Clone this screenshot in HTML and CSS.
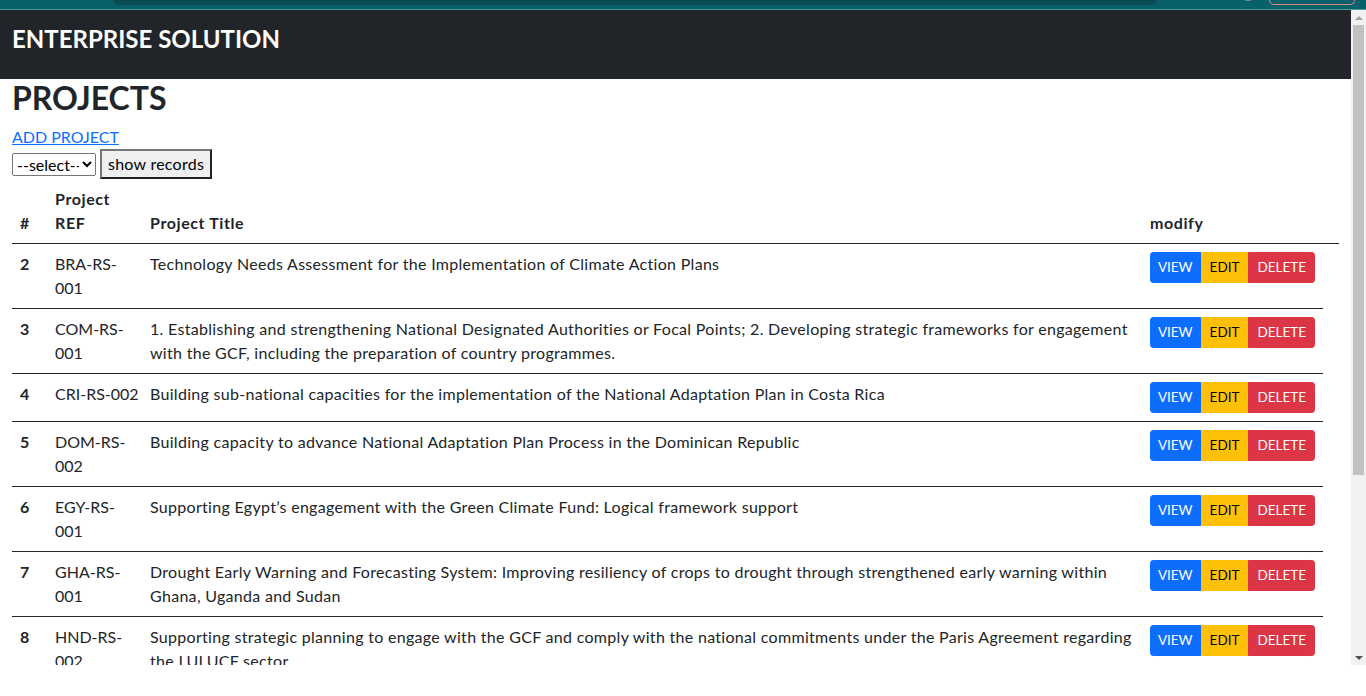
FILE: index.html
```html
<!DOCTYPE html>
<html lang="en">
<head>
<meta charset="utf-8">
<title>Projects</title>
<link rel="stylesheet" href="styles.css">
</head>
<body>
<div class="os-strip">
  <div class="strip-tab"></div>
  <div class="strip-dot"></div>
  <div class="strip-pill"></div>
</div>
<div class="viewport">
  <div class="page">
    <nav class="navbar"><span class="brand">ENTERPRISE SOLUTION</span></nav>
    <main class="container">
      <h2 class="page-title">PROJECTS</h2>
      <a href="#" class="add-link">ADD PROJECT</a>
      <form class="filter">
        <select class="filter-select"><option>--select--</option></select>
        <button type="button" class="filter-btn">show records</button>
      </form>
      <table class="table">
        <colgroup>
          <col class="c-num"><col class="c-ref"><col class="c-title"><col class="c-mod"><col class="c-extra">
        </colgroup>
        <thead>
          <tr><th>#</th><th class="ref">Project REF</th><th>Project Title</th><th>modify</th><th></th></tr>
        </thead>
        <tbody>
          <tr><th>2</th><td class="ref">BRA-RS-001</td><td class="title">Technology Needs Assessment for the Implementation of Climate Action Plans</td><td><div class="btn-group"><a class="btn btn-view" href="#">VIEW</a><a class="btn btn-edit" href="#">EDIT</a><a class="btn btn-delete" href="#">DELETE</a></div></td></tr>
          <tr><th>3</th><td class="ref">COM-RS-001</td><td class="title">1. Establishing and strengthening National Designated Authorities or Focal Points; 2. Developing strategic frameworks for engagement with the GCF, including the preparation of country programmes.</td><td><div class="btn-group"><a class="btn btn-view" href="#">VIEW</a><a class="btn btn-edit" href="#">EDIT</a><a class="btn btn-delete" href="#">DELETE</a></div></td></tr>
          <tr><th>4</th><td class="ref">CRI-RS-002</td><td class="title">Building sub-national capacities for the implementation of the National Adaptation Plan in Costa Rica</td><td><div class="btn-group"><a class="btn btn-view" href="#">VIEW</a><a class="btn btn-edit" href="#">EDIT</a><a class="btn btn-delete" href="#">DELETE</a></div></td></tr>
          <tr><th>5</th><td class="ref">DOM-RS-002</td><td class="title">Building capacity to advance National Adaptation Plan Process in the Dominican Republic</td><td><div class="btn-group"><a class="btn btn-view" href="#">VIEW</a><a class="btn btn-edit" href="#">EDIT</a><a class="btn btn-delete" href="#">DELETE</a></div></td></tr>
          <tr><th>6</th><td class="ref">EGY-RS-001</td><td class="title">Supporting Egypt’s engagement with the Green Climate Fund: Logical framework support</td><td><div class="btn-group"><a class="btn btn-view" href="#">VIEW</a><a class="btn btn-edit" href="#">EDIT</a><a class="btn btn-delete" href="#">DELETE</a></div></td></tr>
          <tr><th>7</th><td class="ref">GHA-RS-001</td><td class="title">Drought Early Warning and Forecasting System: Improving resiliency of crops to drought through strengthened early warning within Ghana, Uganda and Sudan</td><td><div class="btn-group"><a class="btn btn-view" href="#">VIEW</a><a class="btn btn-edit" href="#">EDIT</a><a class="btn btn-delete" href="#">DELETE</a></div></td></tr>
          <tr><th>8</th><td class="ref">HND-RS-002</td><td class="title">Supporting strategic planning to engage with the GCF and comply with the national commitments under the Paris Agreement regarding the LULUCF sector</td><td><div class="btn-group"><a class="btn btn-view" href="#">VIEW</a><a class="btn btn-edit" href="#">EDIT</a><a class="btn btn-delete" href="#">DELETE</a></div></td></tr>
        </tbody>
      </table>
    </main>
  </div>
  <div class="scrollbar" aria-hidden="true">
    <div class="sb-btn"><span class="arrow-up"></span></div>
    <div class="sb-track"><div class="sb-thumb"></div></div>
    <div class="sb-btn"><span class="arrow-down"></span></div>
  </div>
</div>
</body>
</html>
```

FILE: styles.css
```css
* { box-sizing: border-box; }

html, body {
  margin: 0;
  padding: 0;
  background: #fff;
}

body {
  font-family: Lato, "Liberation Sans", sans-serif;
  font-size: 16px;
  line-height: 1.5;
  color: #212529;
  height: 696px;
  overflow: hidden;
}

/* top desktop strip */
.os-strip {
  height: 10px;
  background: #07606a;
  border-bottom: 1px solid #4f9a9a;
  display: flex;
  align-items: flex-start;
}
.strip-tab {
  margin-left: 113px;
  width: 1044px;
  height: 5px;
  background: #0b4c55;
  border-radius: 0 0 6px 6px;
}
.strip-dot {
  margin-left: 88px;
  width: 6px;
  height: 1px;
  background: #6f7f84;
}
.strip-pill {
  margin-left: 18px;
  width: 86px;
  height: 5px;
  border: 1px solid #d98a80;
  border-top: none;
  border-radius: 0 0 8px 8px;
}

/* browser viewport with its scrollbar */
.viewport {
  height: 655px;
  display: flex;
}
.page {
  flex: 1;
  min-width: 0;
  overflow: hidden;
}
.scrollbar {
  width: 15px;
  flex: none;
  background: #f1f1f1;
  display: flex;
  flex-direction: column;
}
.sb-btn {
  height: 15px;
  flex: none;
  display: flex;
  align-items: center;
  justify-content: center;
}
.arrow-up,
.arrow-down {
  width: 0;
  height: 0;
  border-left: 4px solid transparent;
  border-right: 4px solid transparent;
}
.arrow-up { border-bottom: 4px solid #a3a3a3; }
.arrow-down { border-top: 4px solid #505050; }
.sb-track {
  flex: 1;
  padding: 0 2px;
}
.sb-thumb {
  height: 450px;
  background: #c1c1c1;
}

.navbar {
  height: 69px;
  background: #212529;
  padding: 15px 12px 0;
}
.brand {
  display: block;
  color: #fff;
  font-size: 24px;
  font-weight: 700;
  line-height: 28.8px;
}

.container {
  padding: 0 12px;
}

.page-title {
  margin: 0 0 8px;
  font-size: 32px;
  font-weight: 700;
  line-height: 38.4px;
}

.add-link {
  display: inline-block;
  color: #0d6efd;
  text-decoration: underline;
}

.filter {
  margin: 0;
  display: flex;
  align-items: center;
  gap: 4px;
  height: 30px;
}
.filter-select {
  font: inherit;
  font-size: 16px;
  line-height: 20px;
  width: 84px;
  height: 23px;
  padding: 0;
  margin: 0;
  color: #000;
}
.filter-btn {
  font: inherit;
  font-size: 16px;
  line-height: 24px;
  letter-spacing: 0.25px;
  margin: 0;
  padding: 1px 6px;
  color: #000;
  background: #efefef;
  border: 2px outset #767676;
  border-radius: 0;
}

.table {
  width: 100%;
  border-collapse: collapse;
  margin-bottom: 16px;
}
.c-num { width: 35px; }
.c-ref { width: 95px; }
.c-mod { width: 180px; }
.c-extra { width: 16px; }

.table th,
.table td {
  padding: 8px;
  text-align: left;
  vertical-align: top;
}
.table th {
  font-weight: 700;
  letter-spacing: 0.6px;
}
.table .ref { padding-right: 1px; }
.table .title { letter-spacing: 0.3px; }
.table thead th {
  vertical-align: bottom;
  border-bottom: 1px solid #212529;
}
.table tbody th,
.table tbody td {
  border-bottom: 1px solid #212529;
}

.btn-group {
  display: inline-flex;
}
.btn {
  display: inline-block;
  font-size: 13.5px;
  line-height: 21px;
  padding: 4px 8px;
  border: 1px solid transparent;
  text-decoration: none;
  white-space: nowrap;
}
.btn-view {
  padding: 4px 7px;
  background: #0d6efd;
  border-color: #0d6efd;
  color: #fff;
  border-radius: 3.2px 0 0 3.2px;
}
.btn-edit {
  background: #ffc107;
  border-color: #ffc107;
  color: #000;
}
.btn-delete {
  background: #dc3545;
  border-color: #dc3545;
  color: #fff;
  border-radius: 0 3.2px 3.2px 0;
}
```
